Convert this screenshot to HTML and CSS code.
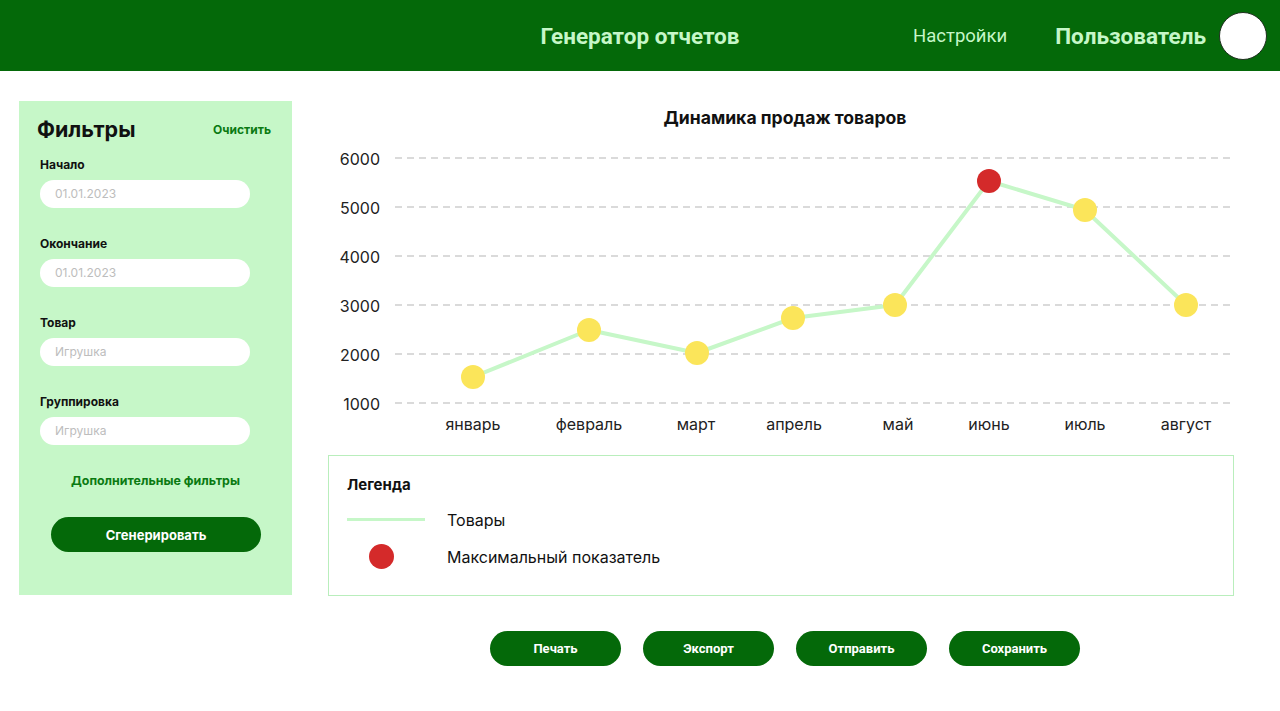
FILE: index.html
```html
<!DOCTYPE html>
<html lang="ru">
<head>
<meta charset="utf-8">
<title>Генератор отчетов</title>
<link rel="stylesheet" href="styles.css">
</head>
<body>
<header class="topbar">
  <div class="topbar-spacer"></div>
  <div class="app-title">Генератор отчетов</div>
  <nav class="topbar-right">
    <span class="nav-link">Настройки</span>
    <span class="user-name">Пользователь</span>
    <span class="avatar"></span>
  </nav>
</header>

<main class="layout">
  <aside class="filters">
    <div class="filters-head">
      <h2 class="filters-title">Фильтры</h2>
      <span class="clear-link">Очистить</span>
    </div>
    <div class="field">
      <label class="field-label">Начало</label>
      <div class="field-input">01.01.2023</div>
    </div>
    <div class="field">
      <label class="field-label">Окончание</label>
      <div class="field-input">01.01.2023</div>
    </div>
    <div class="field">
      <label class="field-label">Товар</label>
      <div class="field-input">Игрушка</div>
    </div>
    <div class="field">
      <label class="field-label">Группировка</label>
      <div class="field-input">Игрушка</div>
    </div>
    <div class="more-filters">Дополнительные фильтры</div>
    <button class="btn btn-generate">Сгенерировать</button>
  </aside>

  <section class="content">
    <div class="chart">
      <svg class="chart-svg" width="906" height="345" viewBox="0 0 906 345">
        <text class="chart-title" x="457" y="17" text-anchor="middle" dominant-baseline="central">Динамика продаж товаров</text>
        <g class="grid">
          <line x1="67" y1="58" x2="902" y2="58"/>
          <line x1="67" y1="107" x2="902" y2="107"/>
          <line x1="67" y1="156" x2="902" y2="156"/>
          <line x1="67" y1="205" x2="902" y2="205"/>
          <line x1="67" y1="254" x2="902" y2="254"/>
          <line x1="67" y1="303" x2="902" y2="303"/>
        </g>
        <g class="axis-y" text-anchor="end">
          <text x="52" y="59" dominant-baseline="central">6000</text>
          <text x="52" y="108" dominant-baseline="central">5000</text>
          <text x="52" y="157" dominant-baseline="central">4000</text>
          <text x="52" y="206" dominant-baseline="central">3000</text>
          <text x="52" y="255" dominant-baseline="central">2000</text>
          <text x="52" y="304" dominant-baseline="central">1000</text>
        </g>
        <polyline class="series" points="145,277 261,230 369,253 465,218 567,205 661,81 757,110 858,205"/>
        <g class="points">
          <circle cx="145" cy="277" r="12"/>
          <circle cx="261" cy="230" r="12"/>
          <circle cx="369" cy="253" r="12"/>
          <circle cx="465" cy="218" r="12"/>
          <circle cx="567" cy="205" r="12"/>
          <circle class="max" cx="661" cy="81" r="12"/>
          <circle cx="757" cy="110" r="12"/>
          <circle cx="858" cy="205" r="12"/>
        </g>
        <g class="axis-x" text-anchor="middle">
          <text x="145" y="324" dominant-baseline="central">январь</text>
          <text x="261" y="324" dominant-baseline="central">февраль</text>
          <text x="368" y="324" dominant-baseline="central">март</text>
          <text x="466" y="324" dominant-baseline="central">апрель</text>
          <text x="570" y="324" dominant-baseline="central">май</text>
          <text x="661" y="324" dominant-baseline="central">июнь</text>
          <text x="757" y="324" dominant-baseline="central">июль</text>
          <text x="858" y="324" dominant-baseline="central">август</text>
        </g>
      </svg>
    </div>

    <div class="legend">
      <h3 class="legend-title">Легенда</h3>
      <div class="legend-row">
        <span class="legend-mark"><span class="legend-line"></span></span>
        <span class="legend-text">Товары</span>
      </div>
      <div class="legend-row">
        <span class="legend-mark"><span class="legend-dot"></span></span>
        <span class="legend-text">Максимальный показатель</span>
      </div>
    </div>

    <div class="actions">
      <button class="btn btn-action">Печать</button>
      <button class="btn btn-action">Экспорт</button>
      <button class="btn btn-action">Отправить</button>
      <button class="btn btn-action">Сохранить</button>
    </div>
  </section>
</main>
</body>
</html>
```

FILE: styles.css
```css
* { box-sizing: border-box; }

body {
  margin: 0;
  background: #ffffff;
  font-family: Inter, "Noto Sans", sans-serif;
  color: #111;
}

.topbar {
  height: 71px;
  background: #046909;
  display: grid;
  grid-template-columns: 1fr auto 1fr;
  align-items: center;
  font-family: Roboto, "Noto Sans", sans-serif;
  color: #c6f7c8;
}

.app-title {
  font-size: 22.5px;
  font-weight: 700;
  padding-top: 1px;
}

.topbar-right {
  display: flex;
  align-items: center;
  justify-content: flex-end;
  padding-right: 13px;
}

.nav-link {
  font-size: 18.5px;
  font-weight: 400;
  margin-right: 48px;
}

.user-name {
  font-size: 22.5px;
  font-weight: 700;
  margin-right: 13px;
}

.avatar {
  width: 48px;
  height: 48px;
  border-radius: 50%;
  background: #fff;
  border: 1px solid #1f2f1f;
}

.layout {
  display: flex;
  align-items: flex-start;
  padding: 30px 46px 0 19px;
  gap: 36px;
}

.filters {
  width: 273px;
  height: 494px;
  background: #c6f7c8;
  padding: 16px 21px 0 21px;
  display: flex;
  flex-direction: column;
}

.filters-head {
  display: flex;
  align-items: center;
  justify-content: space-between;
  margin-left: -3px;
  height: 24px;
}

.filters-title {
  margin: 0;
  font-size: 21.5px;
  font-weight: 700;
  color: #111;
}

.clear-link {
  font-size: 12px;
  font-weight: 700;
  color: #0a7a12;
}

.field {
  margin-top: 16px;
  display: flex;
  flex-direction: column;
}

.field + .field { margin-top: 28px; }

.field-label {
  font-size: 12px;
  font-weight: 700;
  color: #111;
  line-height: 16px;
}

.field-input {
  margin-top: 7px;
  width: 210px;
  height: 28px;
  border-radius: 14px;
  background: #fff;
  color: #bdbdbd;
  font-size: 12px;
  line-height: 28px;
  padding-left: 15px;
}

.more-filters {
  margin-top: 28px;
  text-align: center;
  width: 231px;
  font-size: 12.4px;
  font-weight: 700;
  color: #0a7a12;
  line-height: 16px;
}

.btn {
  border: none;
  color: #fff;
  background: #046909;
  font-family: Roboto, "Noto Sans", sans-serif;
  font-weight: 700;
  cursor: pointer;
}

.btn-generate {
  margin-top: 28px;
  margin-left: 11px;
  width: 210px;
  height: 35px;
  border-radius: 18px;
  font-size: 13px;
  font-family: Inter, "Noto Sans", sans-serif;
}

.content {
  width: 906px;
  display: flex;
  flex-direction: column;
}

.chart-svg {
  display: block;
  margin-top: -1px;
}

.chart-title {
  font-family: Inter, "Noto Sans", sans-serif;
  font-size: 17.6px;
  font-weight: 700;
  fill: #111;
}

.grid line {
  stroke: #b5b5b5;
  stroke-width: 1;
  stroke-dasharray: 7 5;
}

.axis-y text, .axis-x text {
  font-family: Inter, "Noto Sans", sans-serif;
  font-size: 16px;
  fill: #222;
}

.series {
  fill: none;
  stroke: #c6f7c8;
  stroke-width: 4;
  stroke-linejoin: round;
}

.points circle { fill: #fbe55a; }
.points circle.max { fill: #d42a2a; }

.legend {
  margin-top: 10px;
  height: 141px;
  border: 1px solid #b9eebc;
  padding: 20px 18px 0 18px;
}

.legend-title {
  margin: 0 0 7px 0;
  font-size: 15px;
  font-weight: 700;
  line-height: 18px;
  color: #111;
}

.legend-row {
  display: flex;
  align-items: center;
  height: 37px;
}

.legend-mark {
  width: 100px;
  display: flex;
  align-items: center;
}

.legend-line {
  width: 78px;
  height: 3px;
  background: #c6f7c8;
}

.legend-dot {
  width: 25px;
  height: 25px;
  border-radius: 50%;
  background: #d42a2a;
  margin-left: 22px;
}

.legend-text {
  font-size: 16px;
  color: #111;
}

.actions {
  margin-top: 35px;
  display: flex;
  justify-content: center;
  gap: 22px;
  padding-left: 8px;
}

.btn-action {
  width: 131px;
  height: 35px;
  border-radius: 18px;
  font-size: 13px;
}
```
